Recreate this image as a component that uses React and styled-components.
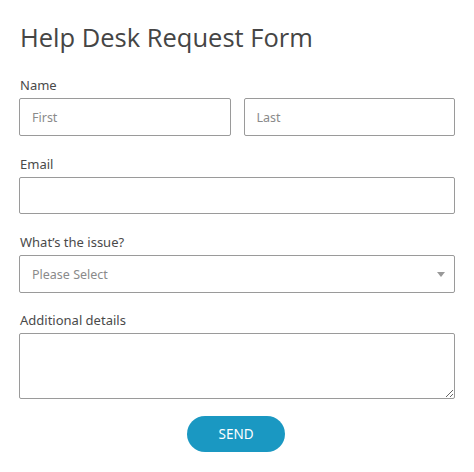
import React from "react";
import styled, { createGlobalStyle } from "styled-components";

const Global = createGlobalStyle`
  html, body { margin: 0; padding: 0; background: #fff; }
  body { font-family: "Noto Sans", "Open Sans", sans-serif; }
  * { box-sizing: border-box; }
`;

const Form = styled.form`
  width: 474px;
  padding: 19px 19px 0 19px;
  display: flex;
  flex-direction: column;
`;

const Title = styled.h1`
  margin: 0 0 0 1px;
  font-family: "Open Sans", sans-serif;
  font-weight: 400;
  font-size: 25.5px;
  line-height: 36px;
  color: #454545;
`;

const Field = styled.div`
  display: flex;
  flex-direction: column;
  margin-top: ${(p) => p.$top}px;
`;

const Label = styled.label`
  font-family: "Noto Sans", sans-serif;
  font-size: 13px;
  line-height: 18px;
  color: #4a4a4a;
  margin: 0 0 4px 1px;
`;

const Row = styled.div`
  display: flex;
  gap: 13px;
`;

const Input = styled.input`
  display: block;
  width: 100%;
  min-width: 0;
  height: ${(p) => p.$h || 38}px;
  border: 1px solid #9a9a9a;
  border-radius: 2px;
  padding: 0 12px;
  font-family: "Noto Sans", sans-serif;
  font-size: 12.5px;
  color: #444;
  background: #fff;
  outline: none;
  &::placeholder { color: #8a8a8a; }
`;

const SelectBox = styled.div`
  height: 38px;
  border: 1px solid #9a9a9a;
  border-radius: 2px;
  display: flex;
  align-items: center;
  padding: 0 12px;
  font-family: "Noto Sans", sans-serif;
  font-size: 12.5px;
  color: #8a8a8a;
`;

const Arrow = styled.span`
  margin-left: auto;
  width: 0;
  height: 0;
  border-left: 4.5px solid transparent;
  border-right: 4.5px solid transparent;
  border-top: 5px solid #999;
  margin-right: -3px;
`;

const Textarea = styled.textarea`
  display: block;
  height: 66px;
  border: 1px solid #9a9a9a;
  border-radius: 2px;
  resize: vertical;
  outline: none;
  font-family: "Noto Sans", sans-serif;
  padding: 8px 12px;
`;

const Actions = styled.div`
  display: flex;
  justify-content: center;
  margin-top: 17px;
  padding-right: 2px;
`;

const Button = styled.button`
  width: 98px;
  height: 36px;
  border: none;
  border-radius: 18px;
  background: #1a98c2;
  color: #fff;
  font-family: "Noto Sans", sans-serif;
  font-size: 13.5px;
  cursor: pointer;
`;

export default function App() {
  return (
    <>
      <Global />
      <Form onSubmit={(e) => e.preventDefault()}>
        <Title>Help Desk Request Form</Title>
        <Field $top={21}>
          <Label>Name</Label>
          <Row>
            <Input placeholder="First" />
            <Input placeholder="Last" />
          </Row>
        </Field>
        <Field $top={19}>
          <Label>Email</Label>
          <Input $h={37} />
        </Field>
        <Field $top={19}>
          <Label>What’s the issue?</Label>
          <SelectBox>
            Please Select
            <Arrow />
          </SelectBox>
        </Field>
        <Field $top={18}>
          <Label>Additional details</Label>
          <Textarea />
        </Field>
        <Actions>
          <Button type="submit">SEND</Button>
        </Actions>
      </Form>
    </>
  );
}
